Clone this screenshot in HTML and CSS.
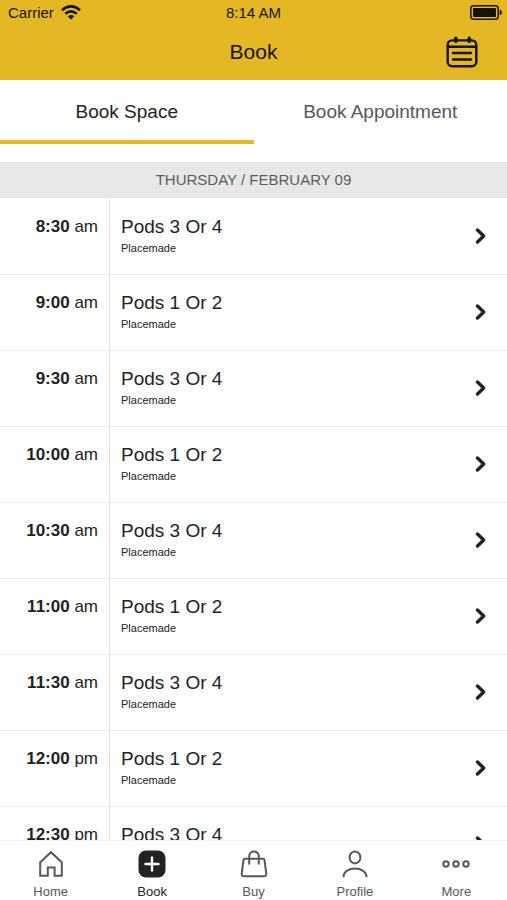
FILE: index.html
```html
<!DOCTYPE html>
<html lang="en">
<head>
<meta charset="utf-8">
<meta name="viewport" content="width=device-width, initial-scale=1">
<title>Book</title>
<link rel="stylesheet" href="styles.css">
</head>
<body>
<svg class="defs" aria-hidden="true">
  <symbol id="chevron" viewBox="0 0 12 18"><path d="M2.5 3 8.7 9 2.5 15" fill="none" stroke="currentColor" stroke-width="3.4" stroke-linecap="round" stroke-linejoin="round"/></symbol>
</svg>
<header class="top">
  <div class="status">
    <span class="carrier">Carrier
      <svg width="20" height="15" viewBox="0 0 20 15" fill="none" stroke="currentColor" stroke-width="2.6" aria-hidden="true"><path d="M1 5.2Q10-2.4 19 5.2M4.3 8.7Q10 4 15.7 8.7"/><path d="M10 14.6 6.8 11.3Q10 8.8 13.2 11.3Z" fill="currentColor" stroke="none"/></svg>
    </span>
    <span>8:14 AM</span>
    <svg class="battery" width="32" height="15" viewBox="0 0 32 15" aria-hidden="true"><rect x=".8" y=".8" width="27.4" height="13.4" rx="3" fill="none" stroke="currentColor" stroke-width="1.5"/><rect x="3" y="3" width="23" height="9" rx="1" fill="currentColor"/><path d="M29.7 4.7Q32 5.5 32 7.5T29.7 10.3Z" fill="currentColor"/></svg>
  </div>
  <div class="titlebar">
    <h1>Book</h1>
    <button class="calendar" type="button" aria-label="Calendar">
      <svg width="32" height="32" viewBox="0 0 32 32" fill="none" stroke="currentColor" stroke-width="2.4" stroke-linecap="round" aria-hidden="true"><rect x="1.7" y="4.4" width="28.6" height="25.8" rx="4.5"/><path d="M2 10.8H30M7 17H25M7 23.5H25"/><path d="M9.8 2.2V5.4M23.2 2.2V5.4" stroke-width="3.4"/></svg>
    </button>
  </div>
</header>
<nav class="tabs" aria-label="Booking type">
  <a class="tab active" href="#space" aria-current="page">Book Space</a>
  <a class="tab" href="#appointment">Book Appointment</a>
</nav>
<main>
  <h2>THURSDAY / FEBRUARY 09</h2>
  <ul class="slots">
    <li><a class="slot" href="#s1"><span class="time"><b>8:30</b> am</span><span class="info"><span class="name">Pods 3 Or 4</span><span class="place">Placemade</span></span><svg class="chevron"><use href="#chevron"/></svg></a></li>
    <li><a class="slot" href="#s2"><span class="time"><b>9:00</b> am</span><span class="info"><span class="name">Pods 1 Or 2</span><span class="place">Placemade</span></span><svg class="chevron"><use href="#chevron"/></svg></a></li>
    <li><a class="slot" href="#s3"><span class="time"><b>9:30</b> am</span><span class="info"><span class="name">Pods 3 Or 4</span><span class="place">Placemade</span></span><svg class="chevron"><use href="#chevron"/></svg></a></li>
    <li><a class="slot" href="#s4"><span class="time"><b>10:00</b> am</span><span class="info"><span class="name">Pods 1 Or 2</span><span class="place">Placemade</span></span><svg class="chevron"><use href="#chevron"/></svg></a></li>
    <li><a class="slot" href="#s5"><span class="time"><b>10:30</b> am</span><span class="info"><span class="name">Pods 3 Or 4</span><span class="place">Placemade</span></span><svg class="chevron"><use href="#chevron"/></svg></a></li>
    <li><a class="slot" href="#s6"><span class="time"><b>11:00</b> am</span><span class="info"><span class="name">Pods 1 Or 2</span><span class="place">Placemade</span></span><svg class="chevron"><use href="#chevron"/></svg></a></li>
    <li><a class="slot" href="#s7"><span class="time"><b>11:30</b> am</span><span class="info"><span class="name">Pods 3 Or 4</span><span class="place">Placemade</span></span><svg class="chevron"><use href="#chevron"/></svg></a></li>
    <li><a class="slot" href="#s8"><span class="time"><b>12:00</b> pm</span><span class="info"><span class="name">Pods 1 Or 2</span><span class="place">Placemade</span></span><svg class="chevron"><use href="#chevron"/></svg></a></li>
    <li><a class="slot" href="#s9"><span class="time"><b>12:30</b> pm</span><span class="info"><span class="name">Pods 3 Or 4</span><span class="place">Placemade</span></span><svg class="chevron"><use href="#chevron"/></svg></a></li>
  </ul>
</main>
<nav class="bottom" aria-label="Main">
  <a href="#home"><svg viewBox="0 0 28 28"><path d="M3.2 12.3 14 2.2 24.8 12.3V25.8H17.6V17.6H10.8V25.8H3.2Z"/></svg>Home</a>
  <a class="active" href="#book" aria-current="page"><svg viewBox="0 0 28 28"><rect x=".5" y=".5" width="27" height="27" rx="7.5" fill="currentColor" stroke="none"/><path d="M14 7.5V20.5M7.5 14H20.5" stroke="#fff" stroke-width="2.4" stroke-linecap="round"/></svg>Book</a>
  <a href="#buy"><svg viewBox="0 0 28 28"><path d="M5 8.7H23Q24.2 8.7 24.5 10L26.3 23.5Q26.5 26.3 24 26.3H4Q1.5 26.3 1.7 23.5L3.5 10Q3.8 8.7 5 8.7ZM9.2 14.5V6.3C9.2 -.2 18.8 -.2 18.8 6.3V14.5"/></svg>Buy</a>
  <a href="#profile"><svg viewBox="0 0 28 28"><ellipse cx="14" cy="7.4" rx="5.4" ry="6"/><path d="M2.5 27.2C2.5 15.5 25.5 15.5 25.5 27.2"/></svg>Profile</a>
  <a href="#more"><svg viewBox="0 0 28 28"><circle cx="4" cy="14" r="2.7"/><circle cx="14" cy="14" r="2.7"/><circle cx="24" cy="14" r="2.7"/></svg>More</a>
</nav>
</body>
</html>
```
FILE: styles.css
```css
* { box-sizing: border-box; }
body {
  margin: 0;
  height: 100vh;
  display: flex;
  flex-direction: column;
  overflow: hidden;
  background: #fff;
  color: #212224;
  font-family: "Liberation Sans", Arial, sans-serif;
}
a { color: inherit; text-decoration: none; }
svg { display: block; }
.defs { display: none; }

.top { flex: none; background: #e4b824; color: #17130a; }
.status {
  display: grid;
  grid-template-columns: 1fr auto 1fr;
  align-items: center;
  height: 24px;
  padding: 0 5px;
  font-size: 15px;
}
.carrier { display: flex; align-items: center; gap: 7px; padding-left: 3px; }
.battery { justify-self: end; }
.titlebar {
  display: grid;
  grid-template-columns: 1fr auto 1fr;
  align-items: center;
  height: 56px;
  padding: 0 29px;
}
h1 { grid-column: 2; margin: 0; font-size: 21px; font-weight: 400; }
.calendar {
  justify-self: end;
  padding: 0;
  border: 0;
  background: none;
  color: inherit;
}

.tabs { flex: none; display: flex; height: 64px; margin-bottom: 18px; }
.tab {
  flex: 1;
  display: flex;
  align-items: center;
  justify-content: center;
  border-bottom: 4px solid transparent;
  padding-top: 4px;
  font-size: 19px;
  color: #55585c;
}
.tab.active { color: #212224; border-color: #e4b824; }

main { flex: 1; min-height: 0; overflow: hidden; }
h2 {
  margin: 0;
  background: #e7e7e7;
  color: #5c5e61;
  font-size: 15px;
  font-weight: 400;
  line-height: 36px;
  text-align: center;
}
.slots { margin: 0; padding: 1px 0 0; list-style: none; }
.slot { display: flex; height: 76px; border-bottom: 1px solid #ebebed; }
.time {
  width: 110px;
  padding: 18px 11px 0 0;
  border-right: 1px solid #dfe0e3;
  font-size: 17px;
  line-height: 20px;
  text-align: right;
  white-space: nowrap;
}
.info {
  flex: 1;
  display: flex;
  flex-direction: column;
  gap: 3px;
  padding: 16px 0 0 11px;
}
.name { font-size: 19px; line-height: 24px; }
.place { font-size: 11px; line-height: 12px; }
.chevron { width: 12px; height: 18px; margin: 28px 20px 0 0; }

.bottom {
  flex: none;
  display: flex;
  height: 60px;
  border-top: 1px solid #f4f4f5;
  background: #fff;
  color: #55585c;
  font-size: 13px;
}
.bottom a {
  flex: 1;
  display: flex;
  flex-direction: column;
  align-items: center;
  gap: 6px;
  padding-top: 9px;
  line-height: 15px;
}
.bottom svg { width: 28px; height: 28px; fill: none; stroke: currentColor; stroke-width: 2; }
.bottom .active { color: #212224; }
```
